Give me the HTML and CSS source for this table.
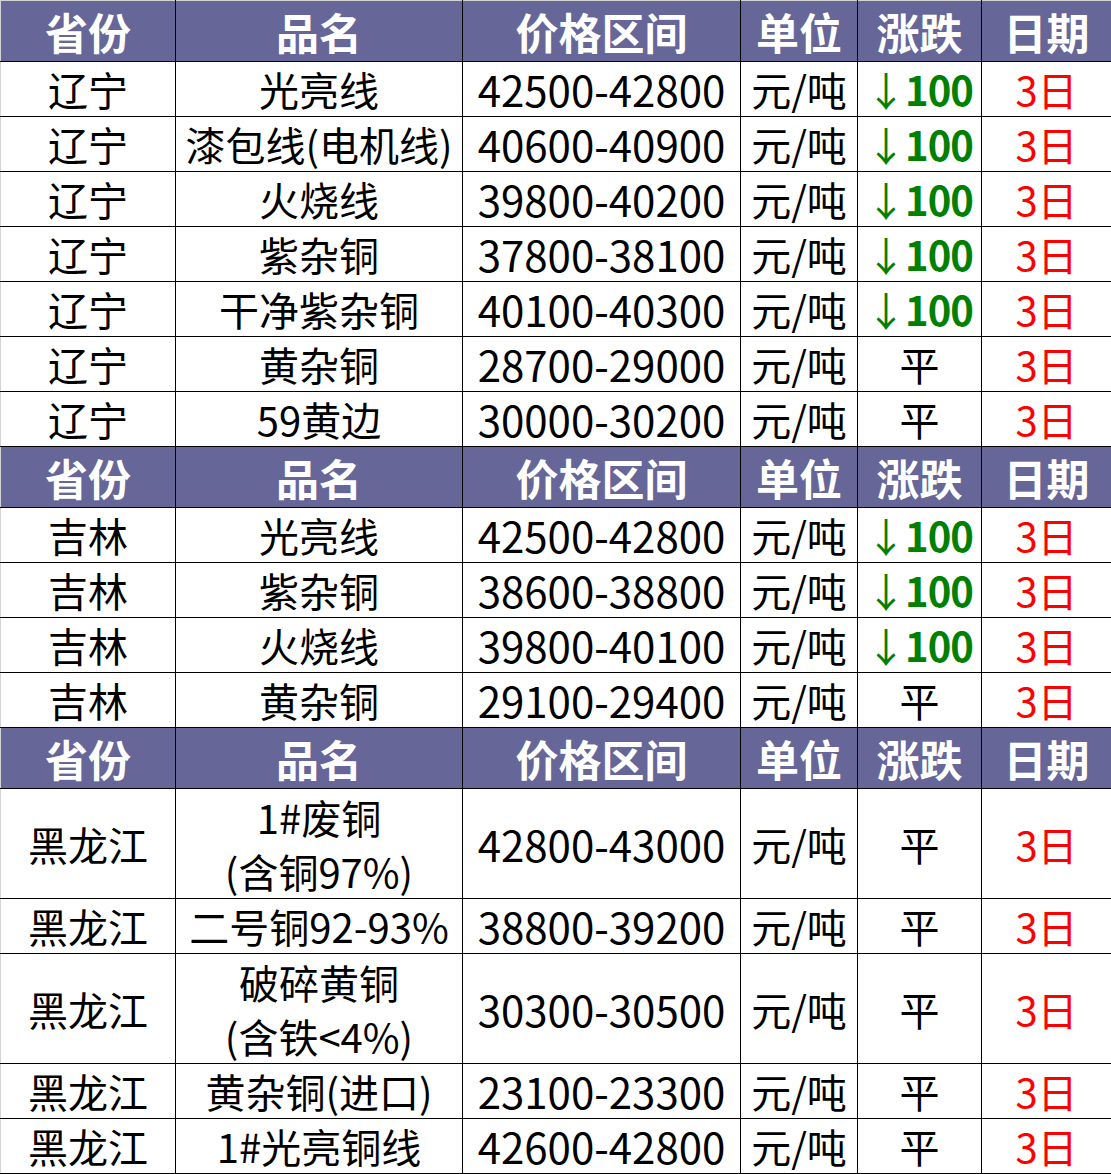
FILE: index.html
```html
<!DOCTYPE html>
<html lang="zh">
<head>
<meta charset="utf-8">
<title>废铜价格</title>
<link rel="stylesheet" href="styles.css">
</head>
<body>
<table class="price">
  <colgroup>
    <col class="c-prov"><col class="c-name"><col class="c-price"><col class="c-unit"><col class="c-chg"><col class="c-date">
  </colgroup>
  <tbody>
    <tr class="head"><th>省份</th><th>品名</th><th>价格区间</th><th>单位</th><th>涨跌</th><th>日期</th></tr>
    <tr><td>辽宁</td><td>光亮线</td><td class="num">42500-42800</td><td>元/吨</td><td class="down"><span class="arrow">↓</span>100</td><td class="date">3日</td></tr>
    <tr><td>辽宁</td><td>漆包线(电机线)</td><td class="num">40600-40900</td><td>元/吨</td><td class="down"><span class="arrow">↓</span>100</td><td class="date">3日</td></tr>
    <tr><td>辽宁</td><td>火烧线</td><td class="num">39800-40200</td><td>元/吨</td><td class="down"><span class="arrow">↓</span>100</td><td class="date">3日</td></tr>
    <tr><td>辽宁</td><td>紫杂铜</td><td class="num">37800-38100</td><td>元/吨</td><td class="down"><span class="arrow">↓</span>100</td><td class="date">3日</td></tr>
    <tr><td>辽宁</td><td>干净紫杂铜</td><td class="num">40100-40300</td><td>元/吨</td><td class="down"><span class="arrow">↓</span>100</td><td class="date">3日</td></tr>
    <tr><td>辽宁</td><td>黄杂铜</td><td class="num">28700-29000</td><td>元/吨</td><td>平</td><td class="date">3日</td></tr>
    <tr><td>辽宁</td><td>59黄边</td><td class="num">30000-30200</td><td>元/吨</td><td>平</td><td class="date">3日</td></tr>
    <tr class="head"><th>省份</th><th>品名</th><th>价格区间</th><th>单位</th><th>涨跌</th><th>日期</th></tr>
    <tr><td>吉林</td><td>光亮线</td><td class="num">42500-42800</td><td>元/吨</td><td class="down"><span class="arrow">↓</span>100</td><td class="date">3日</td></tr>
    <tr><td>吉林</td><td>紫杂铜</td><td class="num">38600-38800</td><td>元/吨</td><td class="down"><span class="arrow">↓</span>100</td><td class="date">3日</td></tr>
    <tr><td>吉林</td><td>火烧线</td><td class="num">39800-40100</td><td>元/吨</td><td class="down"><span class="arrow">↓</span>100</td><td class="date">3日</td></tr>
    <tr><td>吉林</td><td>黄杂铜</td><td class="num">29100-29400</td><td>元/吨</td><td>平</td><td class="date">3日</td></tr>
    <tr class="head"><th>省份</th><th>品名</th><th>价格区间</th><th>单位</th><th>涨跌</th><th>日期</th></tr>
    <tr class="tall"><td>黑龙江</td><td>1#废铜<br>(含铜97%)</td><td class="num">42800-43000</td><td>元/吨</td><td>平</td><td class="date">3日</td></tr>
    <tr><td>黑龙江</td><td>二号铜92-93%</td><td class="num">38800-39200</td><td>元/吨</td><td>平</td><td class="date">3日</td></tr>
    <tr class="tall"><td>黑龙江</td><td>破碎黄铜<br>(含铁&lt;4%)</td><td class="num">30300-30500</td><td>元/吨</td><td>平</td><td class="date">3日</td></tr>
    <tr><td>黑龙江</td><td>黄杂铜(进口)</td><td class="num">23100-23300</td><td>元/吨</td><td>平</td><td class="date">3日</td></tr>
    <tr><td>黑龙江</td><td>1#光亮铜线</td><td class="num">42600-42800</td><td>元/吨</td><td>平</td><td class="date">3日</td></tr>
  </tbody>
</table>
</body>
</html>
```

FILE: styles.css
```css
html, body {
  margin: 0;
  padding: 0;
  background: #ffffff;
}

.price {
  border-collapse: collapse;
  table-layout: fixed;
  width: 1111px;
  font-family: "Noto Sans CJK SC", "Noto Sans", sans-serif;
  font-size: 40px;
  color: #000000;
  border-left: 1px solid #d4d4d4;
  border-top: 1px solid #d4d4d4;
}

.c-prov { width: 175px; }
.c-name { width: 287px; }
.c-price { width: 278px; }
.c-unit { width: 117px; }
.c-chg { width: 124px; }
.c-date { width: 130px; }

.price td,
.price th {
  border: 1px solid #000000;
  text-align: center;
  vertical-align: middle;
  padding: 0;
  line-height: 50px;
  white-space: nowrap;
}

.price tr {
  height: 55px;
}

.price tr.head {
  height: 61px;
}

.price tr.tall {
  height: 110px;
}

.price tr.tall td {
  line-height: 54px;
}

.price th {
  background: #666699;
  color: #ffffff;
  font-weight: bold;
  font-size: 43px;
  line-height: 56px;
}

.price tr:first-child th {
  border-top-color: #d4d4d4;
}

.price td:first-child,
.price th:first-child {
  border-left-color: #d4d4d4;
}

.price .num {
  font-size: 42px;
}

.price .down {
  color: #008000;
  font-weight: bold;
  letter-spacing: -1px;
}

.price .arrow {
  font-weight: normal;
  line-height: 0;
}

.price .date {
  color: #ff0000;
}
```
